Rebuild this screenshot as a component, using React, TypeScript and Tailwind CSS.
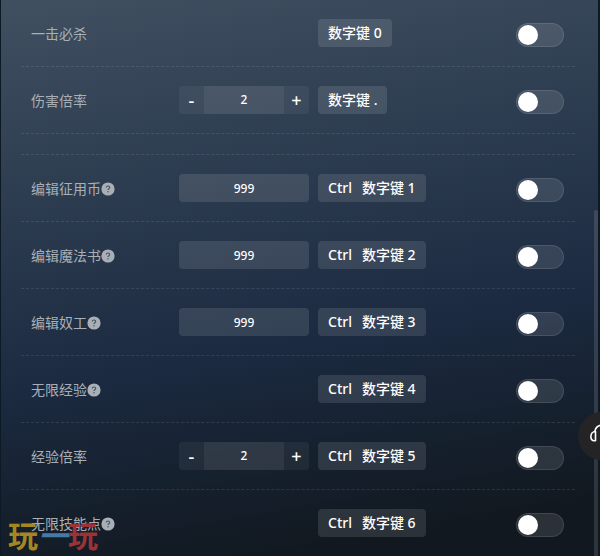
import { useId, useState } from "react";

type Cheat = {
  name: string;
  keys: string[];
  control?: "stepper" | "input";
  value?: string;
  help?: boolean;
};

const GROUPS: Cheat[][] = [
  [
    { name: "一击必杀", keys: ["数字键 0"] },
    { name: "伤害倍率", keys: ["数字键 ."], control: "stepper", value: "2" },
  ],
  [
    { name: "编辑征用币", keys: ["Ctrl", "数字键 1"], control: "input", value: "999", help: true },
    { name: "编辑魔法书", keys: ["Ctrl", "数字键 2"], control: "input", value: "999", help: true },
    { name: "编辑奴工", keys: ["Ctrl", "数字键 3"], control: "input", value: "999", help: true },
    { name: "无限经验", keys: ["Ctrl", "数字键 4"], help: true },
    { name: "经验倍率", keys: ["Ctrl", "数字键 5"], control: "stepper", value: "2" },
    { name: "无限技能点", keys: ["Ctrl", "数字键 6"], help: true },
  ],
];

function HelpIcon() {
  return (
    <svg viewBox="0 0 14 14" className="w-3.5 h-3.5 shrink-0" aria-hidden="true">
      <circle cx="7" cy="7" r="6.6" fill="#a9afb6" />
      <path d="M5.3 5.6c0-1 .7-1.6 1.7-1.6s1.7.6 1.7 1.5c0 1.2-1.7 1.2-1.7 2.5" fill="none" stroke="#46525f" strokeWidth="1.1" />
      <circle cx="7" cy="9.8" r=".7" fill="#46525f" />
    </svg>
  );
}

function Stepper({ label, value, onChange }: { label: string; value: string; onChange: (v: string) => void }) {
  return (
    <div className="flex w-full h-7 rounded overflow-hidden bg-white/5">
      <button aria-label={`${label} -`} onClick={() => onChange(String(Number(value) - 1))} className="w-[25px] text-lg leading-7 font-medium">-</button>
      <input aria-label={label} value={value} onChange={(e) => onChange(e.target.value)} className="flex-1 min-w-0 bg-white/6 text-center text-xs font-medium outline-none" />
      <button aria-label={`${label} +`} onClick={() => onChange(String(Number(value) + 1))} className="w-[25px] text-lg leading-7 font-medium">+</button>
    </div>
  );
}

function CheatRow({ cheat }: { cheat: Cheat }) {
  const id = useId();
  const [value, setValue] = useState(cheat.value ?? "");
  const [enabled, setEnabled] = useState(false);

  return (
    <div className="flex items-center pl-2.5 pr-[11px] py-[19px] border-b border-dashed border-white/10">
      <label htmlFor={id} className="w-[148px] pt-0.5 flex items-center text-sm text-[#a9afb6]">
        {cheat.name}
        {cheat.help && <HelpIcon />}
      </label>
      <div className="w-[130px] mr-[9px]">
        {cheat.control === "stepper" && <Stepper label={cheat.name} value={value} onChange={setValue} />}
        {cheat.control === "input" && (
          <input aria-label={cheat.name} value={value} onChange={(e) => setValue(e.target.value)} className="block w-full h-7 rounded bg-white/11 text-center text-xs font-medium outline-none" />
        )}
      </div>
      <button className="flex gap-2.5 h-7 px-2.5 rounded bg-white/11 text-sm leading-7 font-medium whitespace-nowrap">
        {cheat.keys.map((k) => (<span key={k}>{k}</span>))}
      </button>
      <input
        id={id}
        type="checkbox"
        role="switch"
        checked={enabled}
        onChange={(e) => setEnabled(e.target.checked)}
        className="appearance-none ml-auto mt-0.5 -mb-0.5 w-12 h-6 p-px shrink-0 rounded-full border border-white/10 bg-white/11 cursor-pointer before:block before:w-5 before:h-5 before:rounded-full before:bg-white checked:bg-emerald-500 checked:before:ml-auto"
      />
    </div>
  );
}

export default function App() {
  return (
    <div className="relative overflow-hidden bg-[#0d1a26] pl-px pr-0.5 pb-0.5 text-white font-['Noto_Sans','Noto_Sans_CJK_SC',sans-serif]">
      <main className="relative pl-5 pr-[23px] bg-[linear-gradient(170deg,#405061_0%,#1b2a40_60%,#11181f_92%)]">
        {GROUPS.map((group, i) => (
          <section key={i} className={i > 0 ? "-mb-[3px]" : "pb-5 border-b border-dashed border-white/10"}>
            {group.map((c) => (<CheatRow key={c.name} cheat={c} />))}
          </section>
        ))}
        {/* Scrollbar thumb */}
        <div className="absolute right-0 top-[210px] bottom-0 w-1 rounded-sm bg-white/12" />
      </main>

      {/* Support */}
      <button aria-label="客服" className="absolute -right-[26px] top-[412px] w-12 h-12 rounded-full bg-[#242426]">
        <svg viewBox="0 0 48 48" className="w-12 h-12" fill="none" stroke="#fff" strokeWidth="1.6">
          <path d="M16.8 19.5C17.5 15.5 20.5 13 25 13S32.5 15.5 33.2 19.5" />
          <path d="M17.5 19.5v9.3h-1.3c-2 0-3.3-1.7-3.3-4.2s1.6-5.1 4.6-5.1zM32.5 19.5v9.3h1.3c2 0 3.3-1.7 3.3-4.2s-1.6-5.1-4.6-5.1z" strokeLinejoin="round" />
        </svg>
      </button>

      {/* Watermark */}
      <div className="absolute left-2 bottom-1 flex text-3xl leading-8 font-bold pointer-events-none">
        <span className="text-[#a58722]">玩</span>
        <span className="text-[#437ba6] italic">一</span>
        <span className="text-[#9b3336]">玩</span>
      </div>
    </div>
  );
}
